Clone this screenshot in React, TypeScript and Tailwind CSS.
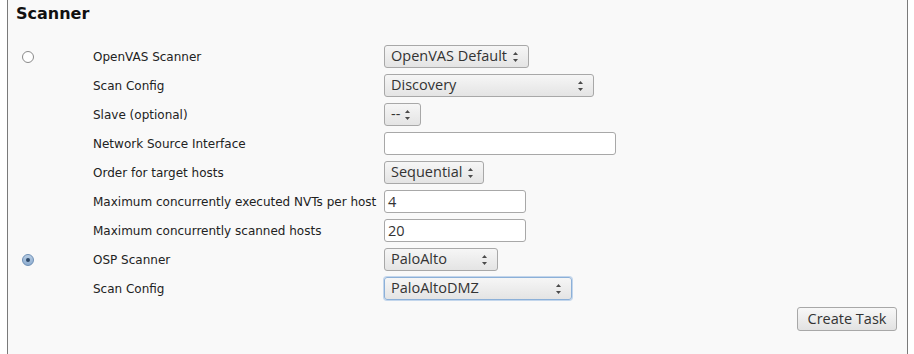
import React from "react";

const labelFont = { fontFamily: '"DejaVu Sans", sans-serif' };

function Arrows() {
  return (
    <svg width="7" height="12" viewBox="0 0 7 12" className="shrink-0">
      <path d="M3.5 1 L6 4 L1 4 Z" fill="#4a4a4a" />
      <path d="M3.5 11 L6 8 L1 8 Z" fill="#4a4a4a" />
    </svg>
  );
}

function Select({ value, width, focus }: { value: string; width: string; focus?: boolean }) {
  return (
    <div
      className={`flex h-[23px] items-center justify-between rounded-[3px] border bg-gradient-to-b from-[#f6f6f6] to-[#e4e4e4] pl-[6px] pr-[9px] font-['Open_Sans',sans-serif] text-[14.5px] text-[#333] ${width} ${
        focus ? "border-[#8cb0d8] shadow-[0_0_0_1px_#c3d6ec]" : "border-[#a8a8a8]"
      }`}
    >
      <span className="leading-none">{value}</span>
      <Arrows />
    </div>
  );
}

function Input({ value, width }: { value?: string; width: string }) {
  return (
    <div
      className={`flex h-[23px] items-center rounded-[3px] border border-[#a8a8a8] bg-white pl-[3px] font-['Open_Sans',sans-serif] text-[14.5px] text-[#333] ${width}`}
    >
      {value}
    </div>
  );
}

function Radio({ checked }: { checked?: boolean }) {
  if (checked) {
    return (
      <div className="flex h-[12px] w-[12px] items-center justify-center rounded-full border border-[#6d8fb5] bg-gradient-to-b from-[#b8cde4] to-[#8eadd0]">
        <div className="h-[4px] w-[4px] rounded-full bg-[#2f4a6a]" />
      </div>
    );
  }
  return <div className="h-[12px] w-[12px] rounded-full border border-[#8a8a8a] bg-white" />;
}

const rows: { radio?: "on" | "off"; label: string; control: React.ReactNode }[] = [
  { radio: "off", label: "OpenVAS Scanner", control: <Select value="OpenVAS Default" width="w-[145px]" /> },
  { label: "Scan Config", control: <Select value="Discovery" width="w-[210px]" /> },
  { label: "Slave (optional)", control: <Select value="--" width="w-[37px]" /> },
  { label: "Network Source Interface", control: <Input width="w-[232px]" /> },
  { label: "Order for target hosts", control: <Select value="Sequential" width="w-[100px]" /> },
  { label: "Maximum concurrently executed NVTs per host", control: <Input value="4" width="w-[142px]" /> },
  { label: "Maximum concurrently scanned hosts", control: <Input value="20" width="w-[142px]" /> },
  { radio: "on", label: "OSP Scanner", control: <Select value="PaloAlto" width="w-[114px]" /> },
  { label: "Scan Config", control: <Select value="PaloAltoDMZ" width="w-[188px]" focus /> },
];

export default function App() {
  return (
    <div className="h-[354px] w-[914px] bg-white pl-[7px]">
      <div className="h-full w-[901px] border-x border-[#7a7a7a] bg-[#f9f9f9] pl-[8px]" style={labelFont}>
        <h3 className="pt-[3px] text-[16px] font-bold leading-[22px] text-[#111]">Scanner</h3>
        <div className="mt-[20px] flex flex-col gap-[6px]">
          {rows.map((r, i) => (
            <div key={i} className="flex h-[23px] items-center">
              <div className="flex w-[77px] justify-start pl-[6px]">
                {r.radio && <Radio checked={r.radio === "on"} />}
              </div>
              <div className="w-[291px] text-[12px] text-[#222]">{r.label}</div>
              {r.control}
            </div>
          ))}
        </div>
        <div className="mt-[7px] flex justify-end pr-[10px]">
          <button className="h-[24px] w-[100px] rounded-[3px] border border-[#a8a8a8] bg-gradient-to-b from-[#f8f8f8] to-[#e2e2e2] font-['Open_Sans',sans-serif] text-[14.5px] text-[#333]">
            Create Task
          </button>
        </div>
      </div>
    </div>
  );
}
